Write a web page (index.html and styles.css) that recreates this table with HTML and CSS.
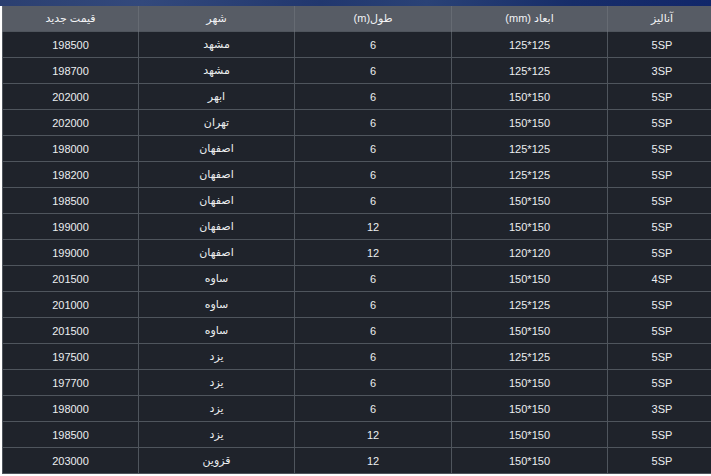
FILE: index.html
```html
<!DOCTYPE html>
<html lang="fa">
<head>
<meta charset="utf-8">
<link rel="stylesheet" href="styles.css">
</head>
<body>
<div class="banner"></div>
<table class="prices" dir="rtl">
  <colgroup>
    <col class="c-analysis"><col class="c-dim"><col class="c-len"><col class="c-city"><col class="c-price">
  </colgroup>
  <thead>
    <tr><th>آنالیز</th><th>ابعاد (mm)</th><th>طول(m)</th><th>شهر</th><th>قیمت جدید</th></tr>
  </thead>
  <tbody>
    <tr><td>5SP</td><td>125*125</td><td>6</td><td>مشهد</td><td>198500</td></tr>
    <tr><td>3SP</td><td>125*125</td><td>6</td><td>مشهد</td><td>198700</td></tr>
    <tr><td>5SP</td><td>150*150</td><td>6</td><td>ابهر</td><td>202000</td></tr>
    <tr><td>5SP</td><td>150*150</td><td>6</td><td>تهران</td><td>202000</td></tr>
    <tr><td>5SP</td><td>125*125</td><td>6</td><td>اصفهان</td><td>198000</td></tr>
    <tr><td>5SP</td><td>125*125</td><td>6</td><td>اصفهان</td><td>198200</td></tr>
    <tr><td>5SP</td><td>150*150</td><td>6</td><td>اصفهان</td><td>198500</td></tr>
    <tr><td>5SP</td><td>150*150</td><td>12</td><td>اصفهان</td><td>199000</td></tr>
    <tr><td>5SP</td><td>120*120</td><td>12</td><td>اصفهان</td><td>199000</td></tr>
    <tr><td>4SP</td><td>150*150</td><td>6</td><td>ساوه</td><td>201500</td></tr>
    <tr><td>5SP</td><td>125*125</td><td>6</td><td>ساوه</td><td>201000</td></tr>
    <tr><td>5SP</td><td>150*150</td><td>6</td><td>ساوه</td><td>201500</td></tr>
    <tr><td>5SP</td><td>125*125</td><td>6</td><td>یزد</td><td>197500</td></tr>
    <tr><td>5SP</td><td>150*150</td><td>6</td><td>یزد</td><td>197700</td></tr>
    <tr><td>3SP</td><td>150*150</td><td>6</td><td>یزد</td><td>198000</td></tr>
    <tr><td>5SP</td><td>150*150</td><td>12</td><td>یزد</td><td>198500</td></tr>
    <tr><td>5SP</td><td>150*150</td><td>12</td><td>قزوین</td><td>203000</td></tr>
  </tbody>
</table>
</body>
</html>
```

FILE: styles.css
```css
html {
  overflow: hidden;
}
body {
  margin: 0;
  background: #ffffff;
  font-family: "Liberation Sans", "DejaVu Sans", sans-serif;
  font-size: 11px;
}
.banner {
  height: 6px;
  background: linear-gradient(90deg, #2b3f70 0%, #33497c 20%, #21376e 45%, #2a4276 60%, #172d69 80%, #11276a 100%);
}
.prices {
  margin-left: 2px;
  width: 714px;
  table-layout: fixed;
  border-collapse: collapse;
  background: #1f232b;
  color: #eceef0;
  border-left: 1px solid #6a7079;
}
.c-price { width: 136px; }
.c-city { width: 156px; }
.c-len { width: 157px; }
.c-dim { width: 156px; }
.prices th {
  height: 25px;
  padding: 0;
  background: #575c65;
  color: #f2f3f5;
  font-weight: normal;
  text-align: center;
  border-left: 1px solid #666b73;
}
.prices td {
  height: 25px;
  padding: 0;
  text-align: center;
  border-top: 1px solid #4f555d;
  border-left: 1px solid #4f555d;
}
.prices tbody tr:last-child td {
  border-bottom: 1px solid #4f555d;
}
```
